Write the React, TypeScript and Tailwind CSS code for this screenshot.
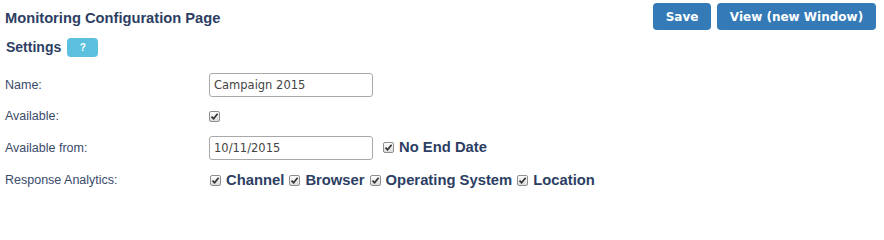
import React from "react";

function Check() {
  return (
    <span className="inline-flex h-[11px] w-[11px] shrink-0 items-center justify-center rounded-[2px] border border-[#8f8f8f] bg-gradient-to-b from-[#fdfdfd] to-[#dcdcdc]">
      <svg width="9" height="9" viewBox="0 0 9 9">
        <path d="M1.5 4.6 L3.6 6.8 L7.6 1.8" fill="none" stroke="#333" strokeWidth="1.7" />
      </svg>
    </span>
  );
}

function Opt({ label }: { label: string }) {
  return (
    <span className="inline-flex items-center gap-[5px]">
      <Check />
      <span className="text-[14.8px] font-bold text-[#2c3e63]">{label}</span>
    </span>
  );
}

export default function App() {
  const label = "w-[204px] shrink-0 text-[12.5px] text-[#3a4a6a]";
  const input =
    "h-[24px] w-[164px] rounded-[3px] border border-[#a9a9a9] bg-white px-[4px] text-[11.5px] text-[#444] [font-family:'DejaVu_Sans',Verdana,sans-serif]";
  return (
    <div className="h-[216px] w-[884px] bg-white pl-[5px] pr-[8px] [font-family:'Liberation_Sans',Arial,sans-serif]">
      <div className="flex items-start justify-between pt-[3px]">
        <div className="pt-[4px] text-[14.7px] font-bold text-[#2c3e63]">Monitoring Configuration Page</div>
        <div className="flex gap-[6px]">
          <button className="h-[27px] w-[58px] rounded-[4px] bg-[#337ab7] text-[12px] font-bold text-white [font-family:'DejaVu_Sans',Verdana,sans-serif]">
            Save
          </button>
          <button className="h-[27px] w-[159px] rounded-[4px] bg-[#337ab7] text-[12px] font-bold text-white [font-family:'DejaVu_Sans',Verdana,sans-serif]">
            View (new Window)
          </button>
        </div>
      </div>
      <div className="mt-[7px] flex items-center gap-[6px] pl-[1px]">
        <span className="text-[14px] font-bold text-[#2c3e63]">Settings</span>
        <span className="inline-flex h-[19px] w-[31px] items-center justify-center rounded-[4px] bg-[#5bc0de] text-[10px] font-bold text-white">
          ?
        </span>
      </div>
      <div className="mt-[15px] flex items-center">
        <div className={label}>Name:</div>
        <input className={input} defaultValue="Campaign 2015" readOnly />
      </div>
      <div className="mt-[12px] flex h-[14px] items-center">
        <div className={label}>Available:</div>
        <Check />
      </div>
      <div className="mt-[13px] flex items-center">
        <div className={label}>Available from:</div>
        <input className={input} defaultValue="10/11/2015" readOnly />
        <span className="ml-[10px] -mt-[2px]">
          <Opt label="No End Date" />
        </span>
      </div>
      <div className="mt-[9px] flex items-center">
        <div className={label}>Response Analytics:</div>
        <div className="flex items-center gap-[5px] pl-[1px]">
          <Opt label="Channel" />
          <Opt label="Browser" />
          <Opt label="Operating System" />
          <Opt label="Location" />
        </div>
      </div>
    </div>
  );
}
